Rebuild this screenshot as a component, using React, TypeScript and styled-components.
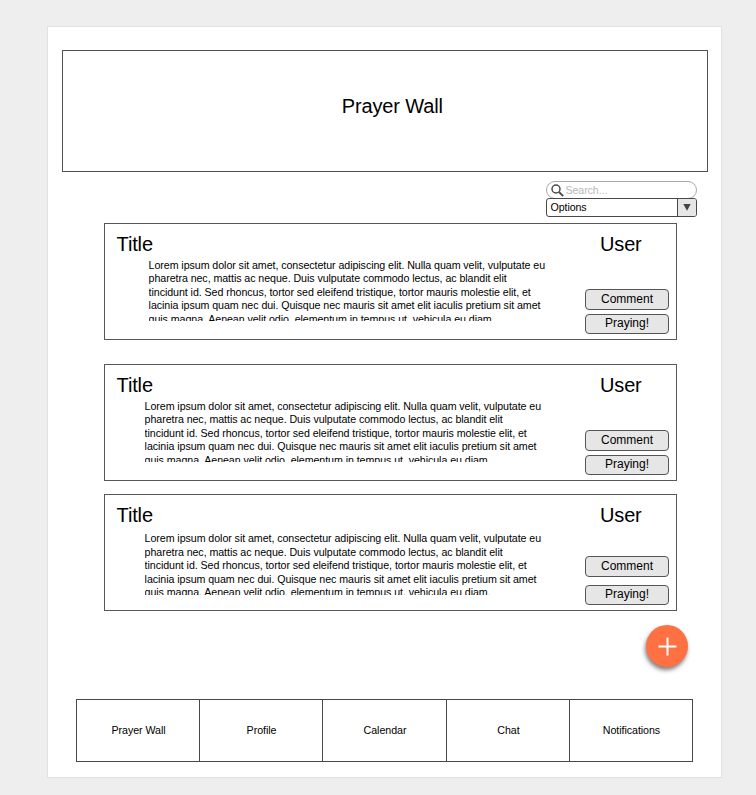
import React from "react";
import styled, { createGlobalStyle } from "styled-components";

const GlobalStyle = createGlobalStyle`
  * { box-sizing: border-box; }
  body {
    margin: 0;
    background: #eeeeee;
    color: #000;
    font-family: "Liberation Sans", Arial, sans-serif;
    font-size: 10.67px;
  }
`;

const Canvas = styled.div`
  height: 795px;
  padding: 26px 34px 0 47px;
  overflow: hidden;
`;

const Sheet = styled.main`
  display: flex;
  flex-direction: column;
  width: 675px;
  height: 752px;
  padding: 23px 13px 0 14px;
  background: #fff;
  border: 1px solid #e1e1e1;
`;

const Banner = styled.header`
  display: flex;
  align-items: center;
  justify-content: center;
  width: 646px;
  height: 122px;
  padding: 0 0 11px 14.6px;
  border: 1px solid #505050;
`;

const Heading = styled.h1`
  margin: 0;
  font-size: 20px;
  font-weight: 400;
  line-height: 24px;
  letter-spacing: -0.15px;
`;

const Filters = styled.div`
  display: flex;
  flex-direction: column;
  width: 151px;
  margin: 9px 0 0 484px;
`;

const SearchBox = styled.label`
  display: flex;
  align-items: center;
  height: 18px;
  padding-left: 4px;
  border: 1px solid #aaa;
  border-radius: 9px;
  color: #b8b8b8;
  line-height: 16px;
`;

const SearchText = styled.span`
  margin-left: 1.5px;
  letter-spacing: -0.1px;
`;

const Select = styled.div`
  display: flex;
  height: 19px;
  margin-top: -1px;
  border: 1px solid #484848;
  border-radius: 3px;
  overflow: hidden;
  background: #fff;
`;

const SelectLabel = styled.span`
  flex: 1;
  padding-left: 3.5px;
  letter-spacing: -0.1px;
  line-height: 16px;
`;

const SelectArrow = styled.span`
  display: flex;
  align-items: center;
  justify-content: center;
  width: 19px;
  border-left: 1px solid #484848;
  background: #e6e6e6;
`;

const Cards = styled.section`
  display: flex;
  flex-direction: column;
  margin: 6px 0 0 42px;
`;

const Card = styled.article<{ $gap: number }>`
  display: grid;
  grid-template-columns: 480px 84px;
  width: 573px;
  height: 117px;
  margin-top: ${(p) => p.$gap}px;
  border: 1px solid #585858;
`;

const CardMain = styled.div`
  padding: 8px 0 0 11.6px;
`;

const CardTitle = styled.h2`
  margin: 0;
  font-size: 20px;
  font-weight: 400;
  line-height: 24px;
  letter-spacing: -0.15px;
`;

const Excerpt = styled.p<{ $top: number; $left: number; $height: number }>`
  height: ${(p) => p.$height}px;
  margin: ${(p) => p.$top}px 0 0 ${(p) => p.$left}px;
  overflow: hidden;
  line-height: 13.5px;
  letter-spacing: -0.066px;
  white-space: nowrap;
`;

const Line = styled.span`
  display: block;
`;

const CardSide = styled.div`
  padding-top: 8px;
`;

const UserName = styled.div`
  padding-left: 15px;
  font-size: 20px;
  line-height: 24px;
  letter-spacing: -0.15px;
`;

const Actions = styled.div<{ $top: number; $gap: number }>`
  display: flex;
  flex-direction: column;
  gap: ${(p) => p.$gap}px;
  margin-top: ${(p) => p.$top}px;
`;

const ActionButton = styled.button<{ $height: number }>`
  width: 84px;
  height: ${(p) => p.$height}px;
  padding: 0 0 2px;
  border: 1px solid #555;
  border-radius: 4px;
  background: #e6e6e6;
  color: #000;
  font: 12px/16px "Liberation Sans", Arial, sans-serif;
`;

const AddButton = styled.button`
  display: flex;
  align-items: center;
  justify-content: center;
  width: 42px;
  height: 42px;
  margin: 14px 0 0 584px;
  padding: 0;
  border: 0;
  border-radius: 50%;
  background: #ff7043;
  box-shadow: -1px 3px 4px rgba(0, 0, 0, 0.5);
`;

const Nav = styled.nav`
  display: grid;
  grid-template-columns: 123px 123px 124px 123px 124px;
  width: 617px;
  height: 63px;
  margin: 32px 0 0 14px;
  border: solid #484848;
  border-width: 1px 0;
`;

const NavItem = styled.a`
  display: flex;
  align-items: center;
  justify-content: center;
  border-left: 1px solid #484848;
  padding: 0 0 1px 1px;
  letter-spacing: -0.06px;

  &:last-child {
    border-right: 1px solid #484848;
  }
`;

const lines = [
  "Lorem ipsum dolor sit amet, consectetur adipiscing elit. Nulla quam velit, vulputate eu",
  "pharetra nec, mattis ac neque. Duis vulputate commodo lectus, ac blandit elit",
  "tincidunt id. Sed rhoncus, tortor sed eleifend tristique, tortor mauris molestie elit, et",
  "lacinia ipsum quam nec dui. Quisque nec mauris sit amet elit iaculis pretium sit amet",
  "quis magna. Aenean velit odio, elementum in tempus ut, vehicula eu diam.",
];

const posts = [
  { gap: 0, top: 2.6, left: 32, height: 62.4, actionsTop: 33, actionsGap: 4 },
  { gap: 24, top: 2.6, left: 28, height: 62.4, actionsTop: 33, actionsGap: 4 },
  { gap: 13, top: 5.1, left: 28, height: 62.9, actionsTop: 29, actionsGap: 8 },
];

const tabs = ["Prayer Wall", "Profile", "Calendar", "Chat", "Notifications"];

export default function App() {
  return (
    <Canvas>
      <GlobalStyle />
      <Sheet>
        <Banner>
          <Heading>Prayer Wall</Heading>
        </Banner>
        <Filters>
          <SearchBox>
            <svg width="13" height="13" viewBox="0 0 13 13" fill="none" stroke="#4c4c4c">
              <circle cx="5" cy="5" r="4" strokeWidth="1.5" />
              <path d="M8 8 L12.2 12.2" strokeWidth="1.9" />
            </svg>
            <SearchText>Search...</SearchText>
          </SearchBox>
          <Select>
            <SelectLabel>Options</SelectLabel>
            <SelectArrow>
              <svg width="8" height="7" viewBox="0 0 8 7">
                <path d="M0.3 0 H7.7 L4 6.8 Z" fill="#444" />
              </svg>
            </SelectArrow>
          </Select>
        </Filters>
        <Cards>
          {posts.map((post, i) => (
            <Card key={i} $gap={post.gap}>
              <CardMain>
                <CardTitle>Title</CardTitle>
                <Excerpt $top={post.top} $left={post.left} $height={post.height}>
                  {lines.map((line) => (
                    <Line key={line}>{line}</Line>
                  ))}
                </Excerpt>
              </CardMain>
              <CardSide>
                <UserName>User</UserName>
                <Actions $top={post.actionsTop} $gap={post.actionsGap}>
                  <ActionButton $height={21}>Comment</ActionButton>
                  <ActionButton $height={20}>Praying!</ActionButton>
                </Actions>
              </CardSide>
            </Card>
          ))}
        </Cards>
        <AddButton aria-label="Add">
          <svg width="19" height="19" viewBox="0 0 19 19" stroke="#fff" strokeWidth="2">
            <path d="M9.5 0.5 V18.5 M0.5 9.5 H18.5" />
          </svg>
        </AddButton>
        <Nav>
          {tabs.map((tab) => (
            <NavItem key={tab}>{tab}</NavItem>
          ))}
        </Nav>
      </Sheet>
    </Canvas>
  );
}
